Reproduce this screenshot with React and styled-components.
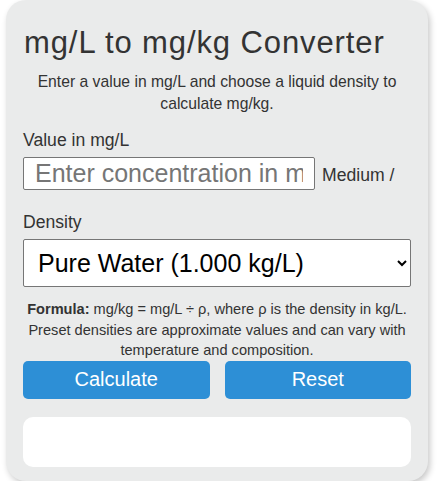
import styled, { createGlobalStyle } from 'styled-components'

const Global = createGlobalStyle`
    body {
        margin: 0;
        background: #ffffff;
        font-family: "Liberation Sans", Arial, sans-serif;
    }
`

function App() {
    return (
        <>
            <Global />
            <Card>
                <Title>mg/L to mg/kg Converter</Title>
                <Intro>
                    Enter a value in mg/L and choose a liquid density to
                    calculate mg/kg.
                </Intro>
                <Field>
                    <Label>Value in mg/L</Label>
                    <InputRow>
                        <ValueInput type="text" placeholder="Enter concentration in mg/L" />
                        <Unit>Medium /</Unit>
                    </InputRow>
                </Field>
                <Field>
                    <Label>Density</Label>
                    <DensitySelect defaultValue="1.000">
                        <option value="1.000">Pure Water (1.000 kg/L)</option>
                        <option value="1.025">Seawater (1.025 kg/L)</option>
                        <option value="0.789">Ethanol (0.789 kg/L)</option>
                    </DensitySelect>
                </Field>
                <Note>
                    <strong>Formula:</strong> mg/kg = mg/L ÷ ρ, where ρ is the density in kg/L.
                    <br />
                    Preset densities are approximate values and can vary with temperature and composition.
                </Note>
                <Buttons>
                    <Button>Calculate</Button>
                    <Button>Reset</Button>
                </Buttons>
                <Result />
            </Card>
        </>
    )
}

export default App

const Card = styled.main`
    box-sizing: border-box;
    width: 422px;
    margin: 0 6px;
    padding: 12px 17px 14px;
    background: #eaebeb;
    border-radius: 20px;
    box-shadow: 2px 3px 6px rgba(0, 0, 0, 0.22);
    color: #333333;
`

const Title = styled.h1`
    margin: 13px 0 0 1px;
    font-size: 31px;
    font-weight: 400;
    letter-spacing: 0.9px;
    line-height: 36px;
    color: #333333;
`

const Intro = styled.p`
    margin: 10px 0 0;
    font-size: 15.7px;
    line-height: 22px;
    text-align: center;
`

const Field = styled.div`
    margin-top: 14px;
    display: flex;
    flex-direction: column;
    & + & {
        margin-top: 21px;
    }
`

const Label = styled.label`
    font-size: 17.6px;
    line-height: 22px;
    margin-bottom: 6px;
`

const InputRow = styled.div`
    display: flex;
    align-items: center;
    gap: 7px;
`

const ValueInput = styled.input`
    box-sizing: border-box;
    width: 292px;
    height: 33px;
    padding: 0 11px;
    font-family: inherit;
    font-size: 25px;
    color: #333333;
    background: #ffffff;
    border: 1px solid #767676;
    border-radius: 2px;
    &::placeholder {
        color: #767676;
    }
`

const Unit = styled.span`
    font-size: 17.6px;
    margin-top: 4px;
`

const DensitySelect = styled.select`
    box-sizing: border-box;
    width: 100%;
    height: 48px;
    padding: 0 8px 0 10px;
    font-family: inherit;
    font-size: 25px;
    color: #000000;
    background: #ffffff;
    border: 1px solid #767676;
    border-radius: 2px;
`

const Note = styled.p`
    margin: 12px 0 0;
    font-size: 14.6px;
    line-height: 20.5px;
    text-align: center;
    strong {
        font-weight: 700;
    }
`

const Buttons = styled.div`
    display: grid;
    grid-template-columns: 1fr 1fr;
    gap: 15px;
    margin-top: 0;
`

const Button = styled.button`
    height: 38px;
    border: none;
    border-radius: 5px;
    background: #2d8fd6;
    color: #ffffff;
    font-family: inherit;
    font-size: 20px;
    cursor: pointer;
`

const Result = styled.div`
    margin-top: 18px;
    height: 50px;
    background: #ffffff;
    border-radius: 10px;
`
